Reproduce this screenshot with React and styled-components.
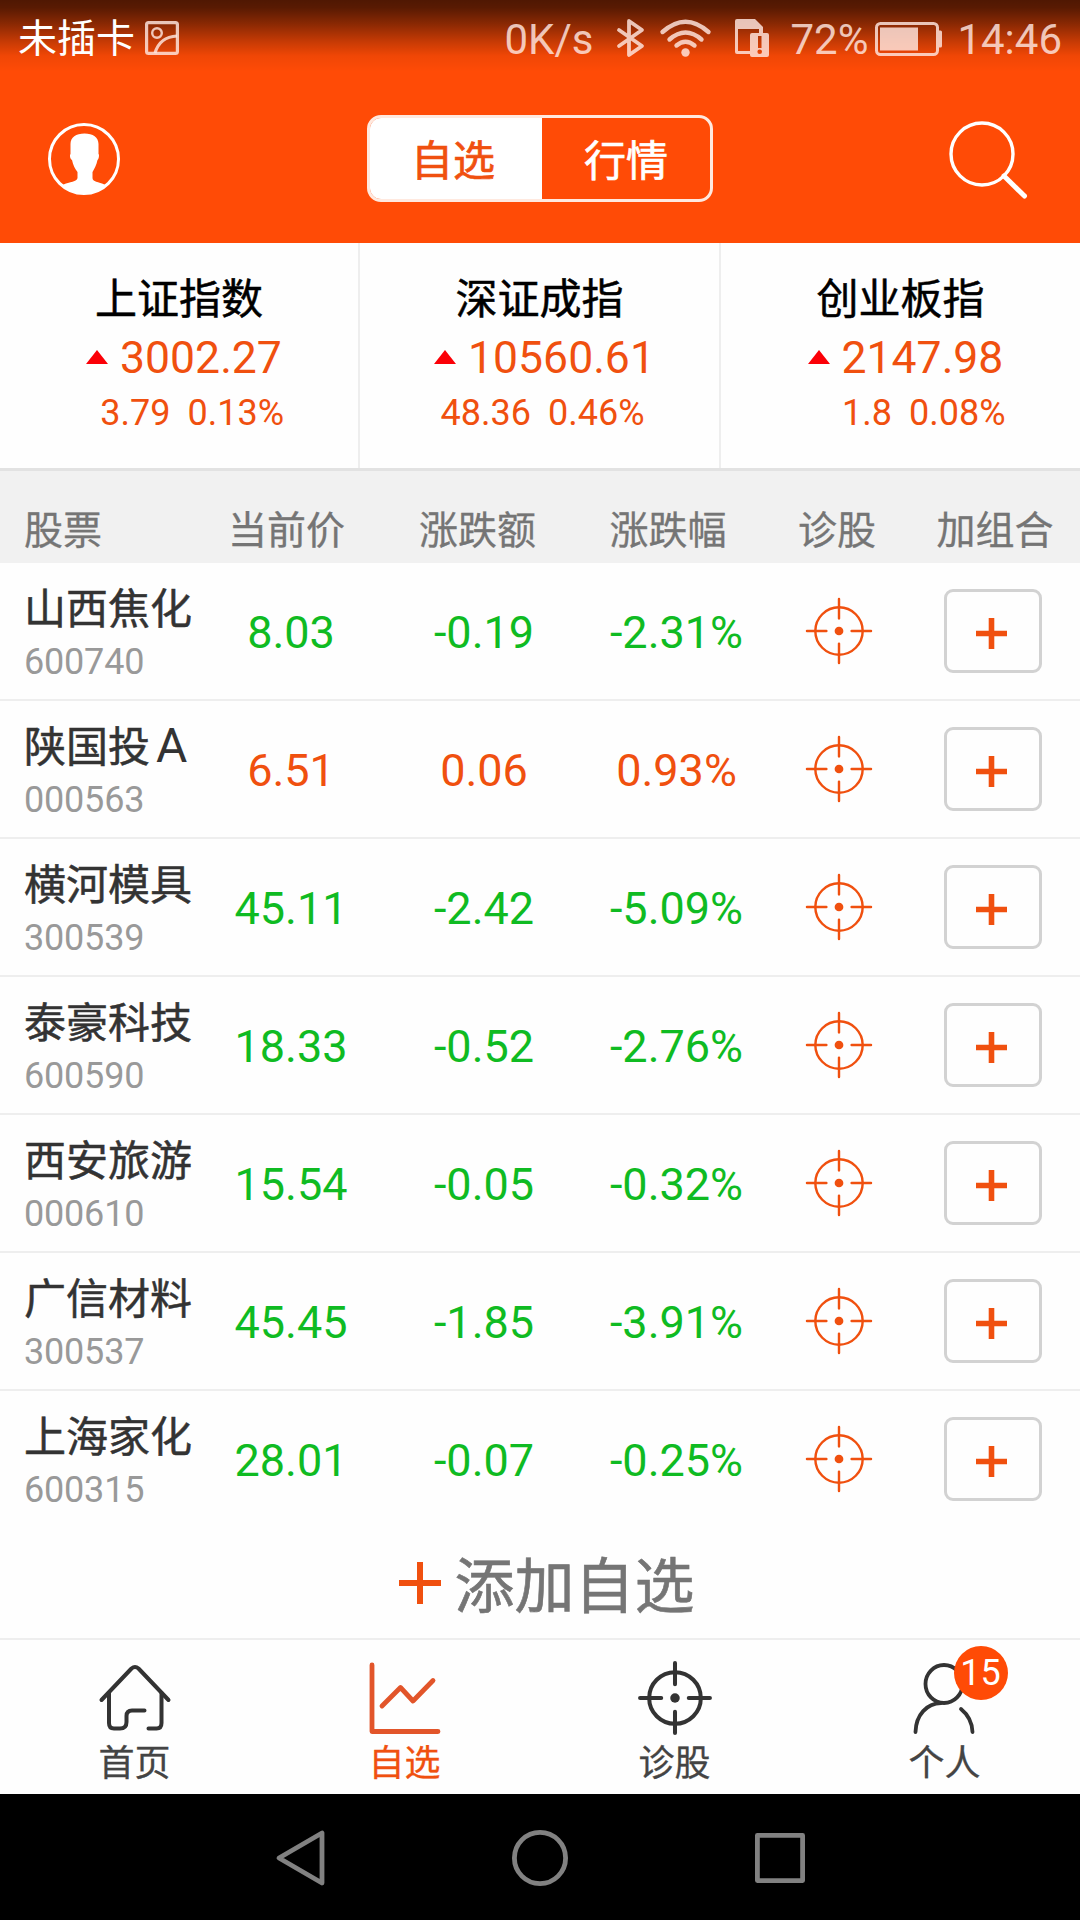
import React, { useState } from 'react';
import styled, { createGlobalStyle, ThemeProvider } from 'styled-components';

const theme = {
  colors: {
    brand: '#ff4b06',
    up: '#f0500f',
    down: '#0fbb22',
    arrow: '#fb0007',
    ink: '#333333',
    label: '#444444',
    muted: '#757575',
    code: '#999999',
    line: '#eeeeee',
    status: 'rgba(255, 232, 226, 0.82)',
  },
  fonts: {
    body: "Roboto, 'Noto Sans CJK SC', sans-serif",
  },
};

const GlobalStyle = createGlobalStyle`
  * {
    box-sizing: border-box;
  }

  body {
    margin: 0;
    background: #fff;
  }

  button {
    padding: 0;
    border: 0;
    background: none;
    font: inherit;
    color: inherit;
  }

  svg {
    display: block;
    flex: none;
    overflow: visible;
  }
`;

const Screen = styled.div`
  display: flex;
  flex-direction: column;
  width: 1080px;
  height: 1920px;
  overflow: hidden;
  background: #fefefe;
  font-family: ${({ theme }) => theme.fonts.body};
`;

const Top = styled.header`
  height: 243px;
  background: linear-gradient(
      rgba(0, 0, 0, 0.69) 0,
      rgba(0, 0, 0, 0.65) 8px,
      rgba(0, 0, 0, 0.46) 24px,
      rgba(0, 0, 0, 0.22) 42px,
      rgba(0, 0, 0, 0.06) 56px,
      rgba(0, 0, 0, 0) 72px
    )
    ${({ theme }) => theme.colors.brand};
`;

const StatusBar = styled.div`
  display: flex;
  align-items: center;
  height: 75px;
  padding: 0 18px;
  color: ${({ theme }) => theme.colors.status};
  font-size: 42px;
  line-height: 75px;
`;

const Carrier = styled.span`
  padding-top: 3px;
  margin-right: 10px;
  color: #fff;
  font-size: 39px;
`;

const StatusText = styled.span`
  padding-top: 3px;
  margin-left: ${({ $gap }) => $gap || 0}px;
`;

const StatusRight = styled.div`
  display: flex;
  align-items: center;
  margin-left: auto;
`;

const StatusIcon = styled.svg`
  margin-left: ${({ $gap }) => $gap || 0}px;
`;

const TitleBar = styled.div`
  display: flex;
  align-items: center;
  justify-content: space-between;
  height: 167px;
  padding: 0 52px 0 48px;
`;

const Segmented = styled.div`
  display: flex;
  width: 346px;
  height: 87px;
  margin-left: 11px;
  border: 3px solid #ffe9df;
  border-radius: 14px;
  overflow: hidden;
`;

const Segment = styled.button`
  flex: ${({ $active }) => ($active ? '0 0 172px' : '1')};
  padding: ${({ $active }) => ($active ? '2px 6px 0 0' : '2px 0 0')};
  background: ${({ $active }) => ($active ? '#fff' : 'transparent')};
  color: ${({ $active, theme }) => ($active ? theme.colors.up : '#fff')};
  font-size: 42px;
  line-height: 83px;
  -webkit-text-stroke: 0.7px currentColor;
`;

const Indices = styled.section`
  display: grid;
  grid-template-columns: 360px 361px 359px;
  height: 228px;
  border-bottom: 3px solid #e2e2e2;
`;

const IndexCard = styled.div`
  padding-top: 28px;
  text-align: center;
  border-right: 2px solid ${({ theme }) => theme.colors.line};

  &:last-child {
    border-right: 0;
  }
`;

const IndexName = styled.div`
  margin-bottom: 1px;
  color: #000;
  font-size: 42px;
  line-height: 58px;
  -webkit-text-stroke: 0.5px currentColor;
`;

const IndexPrice = styled.div`
  display: flex;
  align-items: center;
  justify-content: center;
  gap: 12px;
  padding-left: 10px;
  color: ${({ theme }) => theme.colors.up};
  font-size: 44.5px;
  line-height: 56px;
`;

const UpArrow = styled.i`
  margin-bottom: 3px;
  border: 11px solid transparent;
  border-top: 0;
  border-bottom: 14px solid ${({ theme }) => theme.colors.arrow};
`;

const IndexChange = styled.div`
  display: grid;
  grid-template-columns: 1fr 1fr;
  gap: 17px;
  color: ${({ theme }) => theme.colors.up};
  font-size: 36px;
  line-height: 54px;

  span:first-child {
    text-align: right;
  }

  span:last-child {
    text-align: left;
  }
`;

const TableHead = styled.div`
  display: grid;
  grid-template-columns: 200px 173px 209px 172px 166px 150px;
  height: 92px;
  padding-top: 30px;
  background: #f1f1f1;
  color: ${({ theme }) => theme.colors.muted};
  font-size: 39px;
  line-height: 60px;
  text-align: center;
  -webkit-text-stroke: 0.3px currentColor;

  span:first-child {
    padding-left: 24px;
    text-align: left;
  }
`;

const StockRow = styled.div`
  display: grid;
  grid-template-columns: 200px 182px 204px 181px 144px 164px;
  align-items: center;
  justify-items: center;
  height: 138px;
  border-bottom: 2px solid ${({ theme }) => theme.colors.line};

  &:last-child {
    border-bottom-color: transparent;
  }
`;

const StockTitle = styled.div`
  justify-self: start;
  padding: 10px 0 0 24px;
  white-space: nowrap;
`;

const StockName = styled.div`
  color: ${({ theme }) => theme.colors.ink};
  font-size: 42px;
  line-height: 52px;
  -webkit-text-stroke: 0.5px currentColor;
`;

const ShareClass = styled.span`
  margin-left: 6px;
  font-size: 48px;
  line-height: 1;
  -webkit-text-stroke: 0;
`;

const StockCode = styled.div`
  color: ${({ theme }) => theme.colors.code};
  font-size: 36px;
  letter-spacing: -0.2px;
  line-height: 52px;
`;

const Quote = styled.span`
  padding-top: 4px;
  color: ${({ $up, theme }) => ($up ? theme.colors.up : theme.colors.down)};
  font-size: 45px;
  line-height: 54px;
`;

const TargetButton = styled.button`
  color: ${({ theme }) => theme.colors.up};
`;

const AddButton = styled.button`
  display: grid;
  place-items: center;
  width: 98px;
  height: 84px;
  padding: 4px 3px 0 0;
  border: 3px solid #d2d2d2;
  border-radius: 9px;
  color: ${({ theme }) => theme.colors.up};
`;

const AddStock = styled.button`
  display: flex;
  align-items: center;
  justify-content: center;
  gap: 14px;
  height: 109px;
  padding: 0 0 2px 13px;
  color: ${({ theme }) => theme.colors.up};
`;

const AddLabel = styled.span`
  padding-top: 9px;
  color: ${({ theme }) => theme.colors.muted};
  font-size: 60px;
  line-height: 107px;
  -webkit-text-stroke: 0.6px currentColor;
`;

const TabBar = styled.nav`
  display: grid;
  grid-template-columns: repeat(4, 1fr);
  height: 156px;
  border-top: 2px solid ${({ theme }) => theme.colors.line};
`;

const Tab = styled.button`
  display: flex;
  flex-direction: column;
  align-items: center;
  padding: 22px 1px 0 0;
  color: ${({ $active, theme }) => ($active ? theme.colors.up : theme.colors.ink)};
`;

const TabIcon = styled.div`
  position: relative;
  width: 72px;
  height: 72px;
`;

const TabLabel = styled.span`
  margin-top: 4px;
  color: ${({ $active, theme }) => ($active ? theme.colors.up : theme.colors.label)};
  font-size: 36px;
  line-height: 52px;
  -webkit-text-stroke: 0.3px currentColor;
`;

const Badge = styled.span`
  position: absolute;
  top: -16px;
  left: 45px;
  width: 54px;
  height: 54px;
  border-radius: 50%;
  background: ${({ theme }) => theme.colors.brand};
  color: #fff;
  font-size: 36px;
  line-height: 54px;
  text-align: center;
`;

const SystemBar = styled.div`
  display: flex;
  flex: 1;
  align-items: center;
  justify-content: center;
  gap: 187px;
  padding-top: 2px;
  background: #000;
  color: #818181;
`;

const indices = [
  { name: '上证指数', price: '3002.27', change: '3.79', percent: '0.13%' },
  { name: '深证成指', price: '10560.61', change: '48.36', percent: '0.46%' },
  { name: '创业板指', price: '2147.98', change: '1.8', percent: '0.08%' },
];

const columns = ['股票', '当前价', '涨跌额', '涨跌幅', '诊股', '加组合'];

const stocks = [
  { name: '山西焦化', code: '600740', price: '8.03', change: '-0.19', percent: '-2.31%' },
  { name: '陕国投', shareClass: 'A', code: '000563', price: '6.51', change: '0.06', percent: '0.93%' },
  { name: '横河模具', code: '300539', price: '45.11', change: '-2.42', percent: '-5.09%' },
  { name: '泰豪科技', code: '600590', price: '18.33', change: '-0.52', percent: '-2.76%' },
  { name: '西安旅游', code: '000610', price: '15.54', change: '-0.05', percent: '-0.32%' },
  { name: '广信材料', code: '300537', price: '45.45', change: '-1.85', percent: '-3.91%' },
  { name: '上海家化', code: '600315', price: '28.01', change: '-0.07', percent: '-0.25%' },
];

const PictureIcon = () => (
  <StatusIcon width="34" height="34" viewBox="0 0 34 34" fill="none" stroke="currentColor" strokeWidth="3.2">
    <rect x="1.6" y="1.6" width="30.8" height="30.8" rx="2" />
    <circle cx="12" cy="12" r="4.8" strokeWidth="2.4" />
    <path d="M10 32C13 22 20 15.5 32 15" />
  </StatusIcon>
);

const BluetoothIcon = () => (
  <StatusIcon
    $gap={24}
    width="27"
    height="38"
    viewBox="0 0 27 38"
    fill="none"
    stroke="currentColor"
    strokeWidth="3.8"
    strokeLinejoin="round"
    strokeLinecap="round"
  >
    <path d="M2 11 25 27 12 36V2L25 11 2 27" />
  </StatusIcon>
);

const WifiIcon = () => (
  <StatusIcon $gap={16} width="51" height="38" viewBox="0 0 51 38" fill="none" stroke="currentColor" strokeWidth="4.4" strokeLinecap="round">
    <path d="M2.5 13Q25.5-7.5 48.5 13" />
    <path d="M9.5 20.5Q25.5 6.5 41.5 20.5" />
    <path d="M16.5 26.5Q25.5 19 34.5 26.5" />
    <circle cx="25.5" cy="33.5" r="4.2" fill="currentColor" stroke="none" />
  </StatusIcon>
);

const SimIcon = () => (
  <StatusIcon $gap={24} width="34" height="38" viewBox="0 0 34 38">
    <path
      fill="currentColor"
      fillRule="evenodd"
      d="M2 0H20L28 8V14H32Q34 14 34 16V36Q34 38 32 38H17Q15 38 15 36V35H2Q0 35 0 33V2Q0 0 2 0ZM3 10V32H15V16Q15 14 17 14H24V10ZM23 17V29H26.5V17ZM24.7 30.5A2.3 2.3 0 1 0 24.7 35.1A2.3 2.3 0 1 0 24.7 30.5Z"
    />
  </StatusIcon>
);

const BatteryIcon = () => (
  <StatusIcon $gap={7} width="67" height="34" viewBox="0 0 67 34">
    <rect x="1.5" y="2.5" width="61" height="31" rx="4" fill="none" stroke="currentColor" strokeWidth="3" />
    <path d="M5 6.5H43V29.5H5ZM64 9.5H65.5Q67 9.5 67 11V25Q67 26.5 65.5 26.5H64Z" fill="currentColor" />
  </StatusIcon>
);

const AvatarIcon = () => (
  <svg width="72" height="72" viewBox="0 0 72 72">
    <circle cx="36" cy="36" r="34.5" fill="none" stroke="#fff" strokeWidth="3" />
    <path
      fill="#fff"
      d="M36.5 10.5C45 10.5 50.5 14.5 50.5 21V31C51.5 31.5 51 36 49.500 37C48.5 42.5 46 46 44.5 49V55C44.5 59 50 58.5 57.5 62C52 67.5 44 71 36 71C28 71 20 67.5 14.5 62C22 58.5 29 59 29.5 55V49C27 46 25 42 24 37C22 36 21.5 32 22.5 31V21C22.5 14.5 28 10.5 36.5 10.5Z"
    />
  </svg>
);

const SearchIcon = () => (
  <svg width="79" height="77" viewBox="0 -1 79 77" fill="none" stroke="#fff" strokeLinecap="round">
    <circle cx="33" cy="33" r="31" strokeWidth="3.4" />
    <path d="M55 55 75.5 75" strokeWidth="5" />
  </svg>
);

const TargetIcon = ({ size = 66, stroke = 2.5 }) => (
  <svg width={size} height={size} viewBox="-34 -34 68 68" fill="none" stroke="currentColor" strokeWidth={stroke} strokeLinecap="round">
    <circle r="24.4" />
    <path d="M0-33V-13M0 13V33M-33 0H-13M13 0H33" />
    <circle r="4.5" fill="currentColor" stroke="none" />
  </svg>
);

const PlusIcon = ({ size, stroke }) => (
  <svg width={size} height={size} viewBox={`0 0 ${size} ${size}`} stroke="currentColor" strokeWidth={stroke}>
    <path d={`M0 ${size / 2}H${size}M${size / 2} 0V${size}`} />
  </svg>
);

const HomeIcon = () => (
  <svg width="72" height="72" viewBox="0 0 72 72" fill="none" stroke="currentColor" strokeWidth="4" strokeLinecap="round" strokeLinejoin="round">
    <path d="M2.5 38 32.5 6.5Q36 3.5 39.5 6.5L69.5 38" />
    <path d="M10 31V61Q10 66.5 15 66.5H21Q27.5 66.5 27.5 60V54Q27.5 48.5 33 48.5H45.5" />
    <path d="M62.5 31V61Q62.5 66.5 57.5 66.5H49.5" />
  </svg>
);

const ChartIcon = () => (
  <svg width="72" height="72" viewBox="0 0 72 72" fill="none" stroke="#e2552a" strokeWidth="4.8" strokeLinecap="round" strokeLinejoin="round">
    <path d="M3 3V69.5H69" />
    <path d="M13 44 31.5 25.5 44 39 64 18.5" />
  </svg>
);

const PersonIcon = () => (
  <svg width="72" height="72" viewBox="0 0 72 72" fill="none" stroke="currentColor" strokeWidth="3.8" strokeLinecap="round">
    <ellipse cx="35" cy="22" rx="18.5" ry="19" />
    <path d="M6.5 70C7 52.5 18 41.5 32 41M52 47Q63 56 63.5 70" />
  </svg>
);

const BackIcon = () => (
  <svg width="49" height="56" viewBox="0 0 49 56" fill="none" stroke="currentColor" strokeWidth="4.8" strokeLinejoin="round">
    <path d="M46 3V53L3 28Z" />
  </svg>
);

const CircleIcon = () => (
  <svg width="56" height="56" viewBox="0 0 56 56" fill="none" stroke="currentColor" strokeWidth="4.8">
    <circle cx="28" cy="28" r="25.6" />
  </svg>
);

const SquareIcon = () => (
  <svg width="50" height="50" viewBox="0 0 50 50" fill="none" stroke="currentColor" strokeWidth="4.8" strokeLinejoin="round">
    <rect x="2.4" y="2.4" width="45.2" height="45.2" />
  </svg>
);

const tabs = [
  { label: '首页', icon: <HomeIcon /> },
  { label: '自选', icon: <ChartIcon /> },
  { label: '诊股', icon: <TargetIcon size={72} stroke={3.8} /> },
  { label: '个人', icon: <PersonIcon />, badge: 15 },
];

const App = () => {
  const [segment, setSegment] = useState('自选');
  const [tab, setTab] = useState('自选');

  return (
    <ThemeProvider theme={theme}>
      <GlobalStyle />
      <Screen lang="zh-CN">
        <Top>
          <StatusBar>
            <Carrier>未插卡</Carrier>
            <PictureIcon />
            <StatusRight>
              <StatusText>0K/s</StatusText>
              <BluetoothIcon />
              <WifiIcon />
              <SimIcon />
              <StatusText $gap={21}>72%</StatusText>
              <BatteryIcon />
              <StatusText $gap={15}>14:46</StatusText>
            </StatusRight>
          </StatusBar>
          <TitleBar>
            <AvatarIcon />
            <Segmented>
              {['自选', '行情'].map(item => (
                <Segment key={item} $active={item === segment} onClick={() => setSegment(item)}>
                  {item}
                </Segment>
              ))}
            </Segmented>
            <SearchIcon />
          </TitleBar>
        </Top>

        <Indices>
          {indices.map(item => (
            <IndexCard key={item.name}>
              <IndexName>{item.name}</IndexName>
              <IndexPrice>
                <UpArrow />
                {item.price}
              </IndexPrice>
              <IndexChange>
                <span>{item.change}</span>
                <span>{item.percent}</span>
              </IndexChange>
            </IndexCard>
          ))}
        </Indices>

        <TableHead>
          {columns.map(column => (
            <span key={column}>{column}</span>
          ))}
        </TableHead>

        <div>
          {stocks.map(stock => {
            const up = !stock.change.startsWith('-');
            return (
              <StockRow key={stock.code}>
                <StockTitle>
                  <StockName>
                    {stock.name}
                    {stock.shareClass && <ShareClass>{stock.shareClass}</ShareClass>}
                  </StockName>
                  <StockCode>{stock.code}</StockCode>
                </StockTitle>
                <Quote $up={up}>{stock.price}</Quote>
                <Quote $up={up}>{stock.change}</Quote>
                <Quote $up={up}>{stock.percent}</Quote>
                <TargetButton>
                  <TargetIcon />
                </TargetButton>
                <AddButton>
                  <PlusIcon size={31} stroke={5.6} />
                </AddButton>
              </StockRow>
            );
          })}
        </div>

        <AddStock>
          <PlusIcon size={42} stroke={6} />
          <AddLabel>添加自选</AddLabel>
        </AddStock>

        <TabBar>
          {tabs.map(({ label, icon, badge }) => (
            <Tab key={label} $active={label === tab} onClick={() => setTab(label)}>
              <TabIcon>
                {icon}
                {badge && <Badge>{badge}</Badge>}
              </TabIcon>
              <TabLabel $active={label === tab}>{label}</TabLabel>
            </Tab>
          ))}
        </TabBar>

        <SystemBar>
          <BackIcon />
          <CircleIcon />
          <SquareIcon />
        </SystemBar>
      </Screen>
    </ThemeProvider>
  );
};

export default App;
